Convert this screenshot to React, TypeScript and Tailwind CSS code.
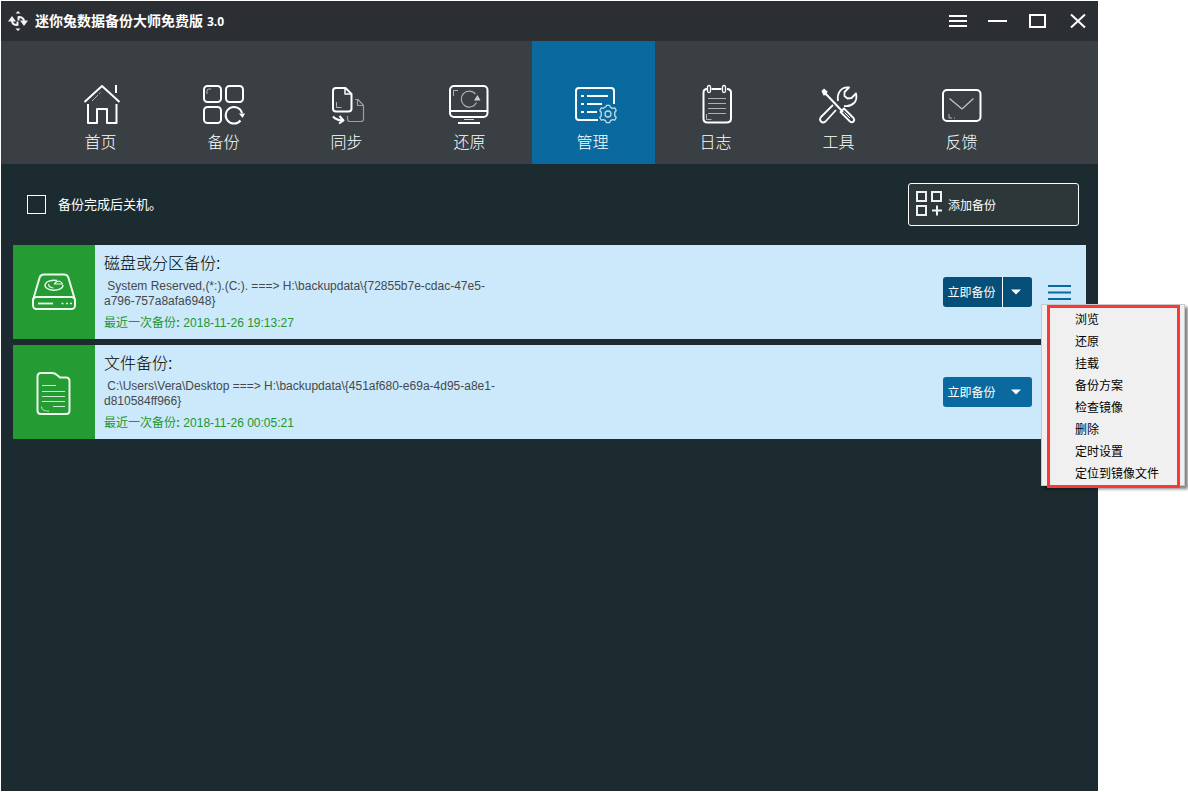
import type { ReactNode } from "react";

const HomeIcon = () => (
  <>
    <path d="M6.5 20 24 4l17.500 16" />
    <path d="M38 3v8" />
    <path d="M10 22v19h9V27h10v14h9.500V22" />
    <g strokeWidth="1" opacity="0.6">
      <path d="M14 19l6-6M21 12l1.500-1.500" />
    </g>
  </>
);

const BackupIcon = () => (
  <>
    <rect x="3" y="4" width="17" height="16" rx="3.500" />
    <rect x="25" y="4" width="17" height="16" rx="3.500" />
    <rect x="3" y="25" width="17" height="16" rx="3.500" />
    <path d="M39.500 38.500A8.300 8.300 0 1 1 41 31" />
    <path d="M38 31.500h6l-2.500 4.500z" fill="currentColor" stroke="none" />
    <path d="M6 12V9q0-2 2-2h2" strokeWidth="1" opacity="0.6" />
  </>
);

const SyncIcon = () => (
  <>
    <path d="M12 6h9.500l6 6v14.500q0 3-3 3H12q-3 0-3-3V9q0-3 3-3z" />
    <path d="M21 6v6h6" strokeWidth="1.500" />
    <path d="M9 34.500q3 3.500 9.500 4M15.500 34l4 4.500-4.500 3" />
    <g strokeWidth="1.200" opacity="0.5">
      <path d="M31 17.500h3l5.500 6V37q0 2.500-2.500 2.500H26q-2.500 0-2.500-2.500v-3" />
      <path d="M33.500 17.500v6h6" />
    </g>
    <path d="M12.500 20v5.500h5" strokeWidth="1" opacity="0.6" />
  </>
);

const RestoreIcon = () => (
  <>
    <rect x="3" y="4" width="37.500" height="31" rx="4" />
    <path d="M3 29h37" />
    <path d="M17 37.500h10" strokeWidth="1" opacity="0.8" />
    <path d="M11 41h22" strokeWidth="2" />
    <path d="M29.500 20.500A8 8 0 1 1 28.500 12" strokeWidth="1.200" opacity="0.6" />
    <path d="M27 18.500h6.500L30.500 13z" fill="currentColor" stroke="none" opacity="0.75" />
    <path d="M6.500 14V8.500H11" strokeWidth="1" opacity="0.6" />
  </>
);

const ManageIcon = () => (
  <>
    <path d="M28 38H9q-3 0-3-3V9q0-3 3-3h32q3 0 3 3v13" />
    <path d="M11 14h3M17 14h21M11 22h3M17 22h15M11 30h3M17 30h10" />
    <g strokeWidth="1.300" opacity="0.75">
      <circle cx="38" cy="32" r="3" />
      <path d="M36 24.500l.5-1.200h3l1 2 2 1 2.200-.5 1.500 2.700-1.500 2v3l1.500 2-1.500 2.700-2.200-.5-2 1-1 2h-3l-1-2-2-1-2.200.5-1.500-2.700 1.500-2v-3l-1.500-2 1.500-2.700 2.200.5z" />
    </g>
  </>
);

const LogIcon = () => (
  <>
    <path d="M14 7q-3.500 0-3.500 3.500v26q0 4 4 4h19q4.500 0 4.500-4v-26Q38 7 34 7M18.500 7h10" />
    <rect x="14.500" y="3.500" width="3" height="7" rx="1.500" strokeWidth="1.300" />
    <rect x="29.500" y="3.500" width="3" height="7" rx="1.500" strokeWidth="1.300" />
    <path d="M15 16.500h18M15 21.500h18M15 26.500h18M15 31.500h18" strokeWidth="1" opacity="0.6" />
    <path d="M13.500 32v5.500h5" strokeWidth="1" opacity="0.6" />
  </>
);

const ToolsIcon = () => (
  <>
    <path d="M17 23 5 35q-2 2.500 0 4.500t4.500 0L20 28" strokeWidth="1.800" />
    <path d="M22 19q-1-6 2-10 3.500-4.500 9-3.500l-4.500 4.500v4l3 2.500 4-.5 4.500-4.500q1.500 6-2 9.500-4 4-10 3" strokeWidth="1.800" />
    <path d="M9 11 27 30" strokeWidth="2" />
    <path d="M5.500 9 8 6.500l3.500 3-1 3.500-3 .500z" fill="currentColor" stroke="none" />
    <path d="M24.500 30 28 26.500l9.500 9.500q1.500 2 0 3.500t-3.500 0z" strokeWidth="1.800" />
    <path d="M28.500 30.500l5.500 5.500" strokeWidth="1" />
  </>
);

const FeedbackIcon = () => (
  <>
    <rect x="4" y="8" width="37.500" height="31" rx="4" />
    <path d="M10.500 16.500 23 27l11.500-10.500" strokeWidth="1.200" opacity="0.7" />
    <path d="M10 32v4h3M15 36h1" strokeWidth="1" opacity="0.6" />
  </>
);

const tabs: { label: string; icon: ReactNode; active?: boolean }[] = [
  { label: "首页", icon: <HomeIcon /> },
  { label: "备份", icon: <BackupIcon /> },
  { label: "同步", icon: <SyncIcon /> },
  { label: "还原", icon: <RestoreIcon /> },
  { label: "管理", icon: <ManageIcon />, active: true },
  { label: "日志", icon: <LogIcon /> },
  { label: "工具", icon: <ToolsIcon /> },
  { label: "反馈", icon: <FeedbackIcon /> },
];

const menuItems = ["浏览", "还原", "挂载", "备份方案", "检查镜像", "删除", "定时设置", "定位到镜像文件"];

const DiskIcon = () => (
  <svg className="h-12 w-12" viewBox="0 0 48 48" fill="none" stroke="#eef8ee" strokeWidth="2" strokeLinejoin="round">
    <path d="M3 32 9.500 10q1-3.500 4.500-3.500h20q3.500 0 4.500 3.500L45 32" />
    <rect x="3" y="29" width="42" height="12" rx="3.500" />
    <path d="M8 35.500h15" strokeWidth="1.800" />
    <path d="M31.500 35.500h2M36 35.500h2M40 35.500h2" strokeWidth="1.500" />
    <path d="M27 12.500A9 5 0 1 0 33 17" strokeWidth="1.400" />
    <path d="M18.500 16q0 3.500 5 4" strokeWidth="1.200" />
    <path d="M24.500 16q1-2.500 4.500-3 3 1 3.500 3z" strokeWidth="1.200" />
  </svg>
);

const FileIcon = () => (
  <svg className="h-12 w-12" viewBox="0 0 48 48" fill="none" stroke="#eef8ee" strokeWidth="2" strokeLinejoin="round">
    <path d="M11 5h11q3 0 5 2l3 2.500h6q3.500 0 3.500 3.500v29.500q0 3.500-3.500 3.500H11q-3.500 0-3.500-3.500v-34Q7.500 5 11 5z" />
    <path d="M12 17.500h14M12 23.500h23M12 28.500h23M12 33.500h23M23 38.500h12" strokeWidth="1" opacity="0.85" />
    <path d="M11.500 38.500q0 4 5 4.500M17 43h2" strokeWidth="1" opacity="0.8" />
  </svg>
);

const tasks = [
  {
    title: "磁盘或分区备份:",
    icon: <DiskIcon />,
    path: " System Reserved,(*:).(C:). ===> H:\\backupdata\\{72855b7e-cdac-47e5-\na796-757a8afa6948}",
    time: "2018-11-26 19:13:27",
    open: true,
  },
  {
    title: "文件备份:",
    icon: <FileIcon />,
    path: " C:\\Users\\Vera\\Desktop ===> H:\\backupdata\\{451af680-e69a-4d95-a8e1-\nd810584ff966}",
    time: "2018-11-26 00:05:21",
    open: false,
  },
];

function ContextMenu() {
  return (
    <div className="absolute top-[27px] -left-[7px] z-10 w-[144px] border border-[#c8c8c8] bg-[#f0f0f0] pt-1 shadow-[3px_3px_3px_rgba(0,0,0,0.5)]">
      <ul role="menu">
        {menuItems.map((item) => (
          <li key={item} role="none">
            <button role="menuitem" className="block h-[22px] w-full pl-[33px] text-left text-xs whitespace-nowrap text-black">
              {item}
            </button>
          </li>
        ))}
      </ul>
      <div className="pointer-events-none absolute top-0 right-1 -bottom-[3px] left-[5px] border-3 border-[#fb3737]" />
    </div>
  );
}

function TaskCard({ task }: { task: (typeof tasks)[number] }) {
  return (
    <article className="flex min-h-[94px] bg-[#cbe9fa]">
      <div className="flex w-[82px] shrink-0 items-center justify-center bg-[#249b33]">{task.icon}</div>
      <div className="min-w-0 flex-1 pt-[9px] pl-[9px]">
        <h2 className="text-base leading-5 font-light text-black">{task.title}</h2>
        <p className="mt-[5px] text-xs leading-[15px] whitespace-pre-wrap text-[#45484d]">{task.path}</p>
        <p className="mt-[6px] text-xs leading-4 text-[#22962f]">
          最近一次备份<b>:</b> {task.time}
        </p>
      </div>
      <div className="flex items-center gap-4 pr-[15px]">
        <div className={`flex h-[30px] overflow-hidden rounded-[3px] text-white ${task.open ? "bg-[#054f78]" : "bg-[#0a6a9f]"}`}>
          <button className="w-[59px] pt-[2px] pr-[2px] text-xs">立即备份</button>
          <button
            aria-label="备份方式"
            className={`flex w-[30px] items-center justify-center border-l pr-[3px] ${task.open ? "border-white" : "border-transparent"}`}
          >
            <svg className="h-[6px] w-[10px]" viewBox="0 0 10 6" fill="white">
              <path d="M0 .500h10L5 5.500z" />
            </svg>
          </button>
        </div>
        <div className="relative">
          <button aria-label="更多操作" className="flex h-[30px] w-[23px] items-center">
            <svg className="h-4 w-[23px]" viewBox="0 0 23 16" stroke="#0a6a9f" strokeWidth="2">
              <path d="M0 2h23M0 8.500h23M0 15h23" />
            </svg>
          </button>
          {task.open && <ContextMenu />}
        </div>
      </div>
    </article>
  );
}

export default function App() {
  return (
    <div className="flex min-h-screen bg-white p-px pr-[90px] font-['Liberation_Sans','Noto_Sans_CJK_SC',sans-serif]">
      <main className="flex flex-1 flex-col bg-[#1c2b30]">
        <header className="flex h-10 items-center bg-[#2b2f33] pr-[10px] pl-[7px] text-white">
          <svg className="h-5 w-5" viewBox="0 0 20 20" fill="#f2f2f2">
            <path d="M7.500 2.500 10 0l2.500 2.500zM7.500 17.500 10 20l2.500-2.500z" />
            <path d="M0 10.500 4 5l4 5.500zM20 9.500 16 15l-4-5.500z" />
            <path
              d="M4 9.500q0 4.500 5.500 4.500V10.500M16 10.500q0-4.500-5.500-4.500v3.500"
              fill="none"
              stroke="#f2f2f2"
              strokeWidth="2"
              strokeLinejoin="round"
            />
          </svg>
          <h1 className="ml-[7px] flex-1 text-sm font-bold">
            迷你兔数据备份大师免费版 <span className="font-['Open_Sans'] text-xs">3.0</span>
          </h1>
          <div className="flex gap-5">
            <button aria-label="菜单">
              <svg className="h-5 w-5" viewBox="0 0 20 20" stroke="white" strokeWidth="2">
                <path d="M1 5h18M1 10h18M1 15h18" />
              </svg>
            </button>
            <button aria-label="最小化">
              <svg className="h-5 w-5" viewBox="0 0 20 20" stroke="white" strokeWidth="2">
                <path d="M0 10h19" />
              </svg>
            </button>
            <button aria-label="最大化">
              <svg className="h-5 w-5" viewBox="0 0 20 20" fill="none" stroke="white" strokeWidth="2">
                <rect x="2" y="4" width="15" height="12" />
              </svg>
            </button>
            <button aria-label="关闭">
              <svg className="h-5 w-5" viewBox="0 0 20 20" stroke="white" strokeWidth="2">
                <path d="M3 3.500 17 16.500M17 3.500 3 16.500" />
              </svg>
            </button>
          </div>
        </header>

        <nav className="flex bg-[#393f42] pl-[39px] text-white">
          {tabs.map((tab) => (
            <a
              key={tab.label}
              href="#"
              aria-current={tab.active ? "page" : undefined}
              className={`flex h-[123px] w-[123px] flex-col items-center pt-[41px] ${tab.active ? "bg-[#0a6a9f]" : ""}`}
            >
              <svg
                className="h-11 w-[47px]"
                viewBox="0 0 47 44"
                fill="none"
                stroke="currentColor"
                strokeWidth="2"
                strokeLinejoin="round"
              >
                {tab.icon}
              </svg>
              <span className="mt-[5px] pr-[2px] text-base leading-6 font-light">{tab.label}</span>
            </a>
          ))}
        </nav>

        <div className="flex items-center justify-between pt-[19px] pr-[19px] pb-[19px] pl-[26px]">
          <label className="flex items-center gap-3 text-[13px] text-white">
            <input type="checkbox" className="h-[19px] w-[19px] appearance-none border border-white checked:bg-[#0a6a9f]" />
            备份完成后关机。
          </label>
          <button className="flex h-[43px] w-[171px] items-center gap-1 rounded-[3px] border border-white bg-[#2d3638] pl-[7px] text-xs text-white">
            <svg className="h-7 w-7" viewBox="0 0 28 28" fill="none" stroke="#f0f0f0" strokeWidth="2">
              <rect x="1" y="1" width="9" height="9" />
              <rect x="16" y="1" width="9" height="9" />
              <rect x="1" y="15" width="9" height="9" />
              <path d="M21 14.500v10M16 19.500h10" />
            </svg>
            <span className="pt-[2px]">添加备份</span>
          </button>
        </div>

        <section className="flex flex-col gap-[6px] pr-3 pl-3">
          {tasks.map((task) => (
            <TaskCard key={task.title} task={task} />
          ))}
        </section>
      </main>
    </div>
  );
}
